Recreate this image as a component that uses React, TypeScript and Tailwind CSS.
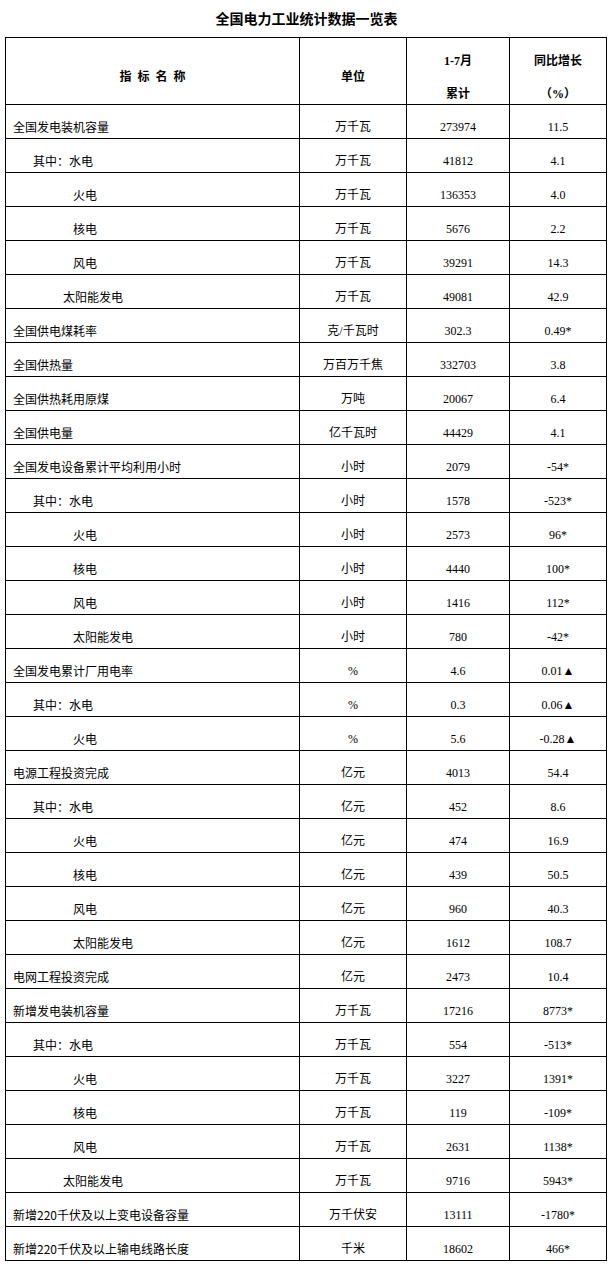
type Row = {
  name: string;
  indent: 0 | 1 | 2 | 3;
  unit: string;
  total: string;
  change: string;
};

// indent: 0 = top level, 1 = "其中：" line, 2 = sub item, 3 = shallower sub item
const rows: Row[] = [
  { name: "全国发电装机容量", indent: 0, unit: "万千瓦", total: "273974", change: "11.5" },
  { name: "其中：水电", indent: 1, unit: "万千瓦", total: "41812", change: "4.1" },
  { name: "火电", indent: 2, unit: "万千瓦", total: "136353", change: "4.0" },
  { name: "核电", indent: 2, unit: "万千瓦", total: "5676", change: "2.2" },
  { name: "风电", indent: 2, unit: "万千瓦", total: "39291", change: "14.3" },
  { name: "太阳能发电", indent: 3, unit: "万千瓦", total: "49081", change: "42.9" },
  { name: "全国供电煤耗率", indent: 0, unit: "克/千瓦时", total: "302.3", change: "0.49*" },
  { name: "全国供热量", indent: 0, unit: "万百万千焦", total: "332703", change: "3.8" },
  { name: "全国供热耗用原煤", indent: 0, unit: "万吨", total: "20067", change: "6.4" },
  { name: "全国供电量", indent: 0, unit: "亿千瓦时", total: "44429", change: "4.1" },
  { name: "全国发电设备累计平均利用小时", indent: 0, unit: "小时", total: "2079", change: "-54*" },
  { name: "其中：水电", indent: 1, unit: "小时", total: "1578", change: "-523*" },
  { name: "火电", indent: 2, unit: "小时", total: "2573", change: "96*" },
  { name: "核电", indent: 2, unit: "小时", total: "4440", change: "100*" },
  { name: "风电", indent: 2, unit: "小时", total: "1416", change: "112*" },
  { name: "太阳能发电", indent: 2, unit: "小时", total: "780", change: "-42*" },
  { name: "全国发电累计厂用电率", indent: 0, unit: "%", total: "4.6", change: "0.01▲" },
  { name: "其中：水电", indent: 1, unit: "%", total: "0.3", change: "0.06▲" },
  { name: "火电", indent: 2, unit: "%", total: "5.6", change: "-0.28▲" },
  { name: "电源工程投资完成", indent: 0, unit: "亿元", total: "4013", change: "54.4" },
  { name: "其中：水电", indent: 1, unit: "亿元", total: "452", change: "8.6" },
  { name: "火电", indent: 2, unit: "亿元", total: "474", change: "16.9" },
  { name: "核电", indent: 2, unit: "亿元", total: "439", change: "50.5" },
  { name: "风电", indent: 2, unit: "亿元", total: "960", change: "40.3" },
  { name: "太阳能发电", indent: 2, unit: "亿元", total: "1612", change: "108.7" },
  { name: "电网工程投资完成", indent: 0, unit: "亿元", total: "2473", change: "10.4" },
  { name: "新增发电装机容量", indent: 0, unit: "万千瓦", total: "17216", change: "8773*" },
  { name: "其中：水电", indent: 1, unit: "万千瓦", total: "554", change: "-513*" },
  { name: "火电", indent: 2, unit: "万千瓦", total: "3227", change: "1391*" },
  { name: "核电", indent: 2, unit: "万千瓦", total: "119", change: "-109*" },
  { name: "风电", indent: 2, unit: "万千瓦", total: "2631", change: "1138*" },
  { name: "太阳能发电", indent: 3, unit: "万千瓦", total: "9716", change: "5943*" },
  { name: "新增220千伏及以上变电设备容量", indent: 0, unit: "万千伏安", total: "13111", change: "-1780*" },
  { name: "新增220千伏及以上输电线路长度", indent: 0, unit: "千米", total: "18602", change: "466*" },
];

const indentClass = ["pl-[7px]", "pl-[27px]", "pl-[67px]", "pl-[57px]"];

const sans = "font-['Noto_Sans_CJK_SC','Noto_Sans',sans-serif]";
const serif = "font-['Liberation_Serif','Noto_Sans_CJK_SC',serif]";

export default function App() {
  return (
    <div className="w-[613px] bg-white text-black">
      <h1
        className={`${sans} h-[37px] pt-[10px] text-center text-[14px] leading-[16px] font-bold`}
      >
        全国电力工业统计数据一览表
      </h1>
      <div className="pl-[5px]">
        <table className="w-[601px] table-fixed border-collapse text-[12px] leading-[14px]">
          <colgroup>
            <col className="w-[294px]" />
            <col className="w-[107px]" />
            <col className="w-[103px]" />
            <col className="w-[97px]" />
          </colgroup>
          <thead>
            <tr className="h-[67px]">
              <th className={`${sans} border border-black align-top pt-[31px] pl-[6px] font-bold tracking-[6px]`}>
                指标名称
              </th>
              <th className={`${sans} border border-black align-top pt-[31px] font-bold`}>单位</th>
              <th className={`${serif} border border-black align-top pt-[16px] font-bold`}>
                <div>1-7月</div>
                <div className="mt-[19px]">累计</div>
              </th>
              <th className={`${serif} border border-black align-top pt-[16px] font-bold`}>
                <div>同比增长</div>
                <div className="mt-[19px]">（%）</div>
              </th>
            </tr>
          </thead>
          <tbody>
            {rows.map((r, i) => (
              <tr key={i} className="h-[34px]">
                <td className={`${sans} ${indentClass[r.indent]} border border-black align-bottom pb-[4px] whitespace-nowrap`}>
                  {r.name}
                </td>
                <td className={`${serif} border border-black align-bottom pb-[4px] text-center`}>
                  {r.unit}
                </td>
                <td className={`${serif} border border-black align-bottom pb-[4px] text-center`}>
                  {r.total}
                </td>
                <td className={`${serif} border border-black align-bottom pb-[4px] text-center`}>
                  {r.change}
                </td>
              </tr>
            ))}
          </tbody>
        </table>
      </div>
    </div>
  );
}
